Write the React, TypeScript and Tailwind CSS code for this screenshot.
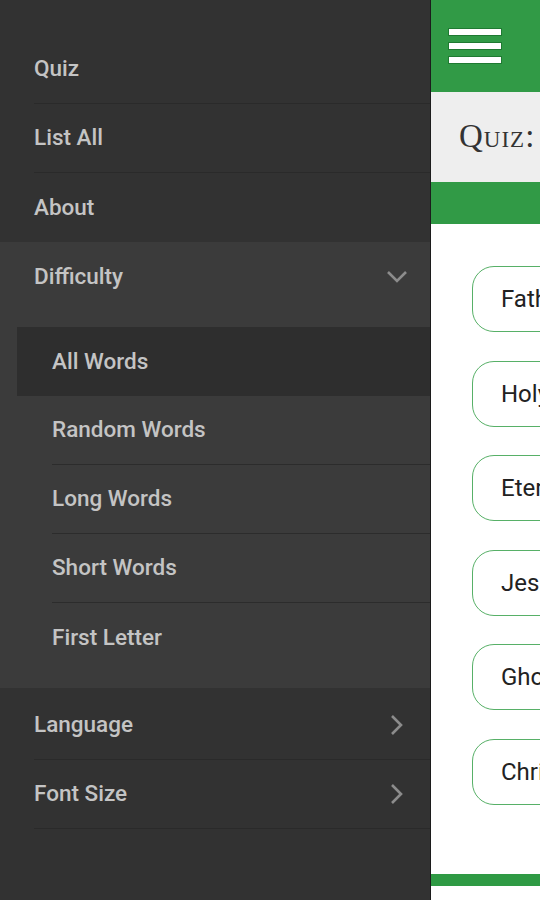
import React from "react";

const font = { fontFamily: "Roboto, 'Liberation Sans', sans-serif" };

function ChevronDown() {
  return (
    <svg width="22" height="14" viewBox="0 0 22 14" className="shrink-0">
      <path d="M2 2 L11 11 L20 2" fill="none" stroke="#8c8c8c" strokeWidth="2.6" />
    </svg>
  );
}

function ChevronRight() {
  return (
    <svg width="14" height="22" viewBox="0 0 14 22" className="shrink-0">
      <path d="M2 2 L11 11 L2 20" fill="none" stroke="#8c8c8c" strokeWidth="2.6" />
    </svg>
  );
}

const topItems = ["Quiz", "List All", "About"];
const subItems = ["All Words", "Random Words", "Long Words", "Short Words", "First Letter"];
const answers = ["Father", "Holy Spirit", "Eternal", "Jesus", "Ghost", "Christ"];

export default function App() {
  return (
    <div className="flex h-[900px] w-[540px] overflow-hidden bg-white" style={font}>
      {/* drawer */}
      <div className="flex w-[431px] shrink-0 flex-col border-r border-[#1c1c1c] bg-[#323232] pt-[35px]">
        {topItems.map((t, i) => (
          <div key={t} className="pl-[34px]">
            <div
              className={
                "flex h-[69px] items-center text-[22.5px] font-medium text-[#c4c4c4] " +
                (i < 2 ? "border-b border-[#2a2a2a]" : "")
              }
            >
              {t}
            </div>
          </div>
        ))}

        <div className="flex flex-col bg-[#3b3b3b] pb-[16px]">
          <div className="flex h-[69px] items-center justify-between pl-[34px] pr-[22px] text-[22.5px] font-medium text-[#c4c4c4]">
            <span>Difficulty</span>
            <ChevronDown />
          </div>
          <div className="mt-[16px] flex flex-col pl-[17px]">
            {subItems.map((t, i) => (
              <div key={t} className={i === 0 ? "bg-[#2e2e2e]" : ""}>
                <div className="pl-[35px]">
                  <div
                    className={
                      "flex h-[69px] items-center text-[22.5px] font-medium text-[#c4c4c4] " +
                      (i > 0 && i < 4 ? "border-b border-[#2c2c2c]" : "")
                    }
                  >
                    {t}
                  </div>
                </div>
              </div>
            ))}
          </div>
        </div>

        <div className="mt-[3px] flex flex-col">
          {["Language", "Font Size"].map((t) => (
            <div key={t} className="pl-[34px]">
              <div className="flex h-[69px] items-center justify-between border-b border-[#2a2a2a] pr-[26px] text-[22.5px] font-medium text-[#c4c4c4]">
                <span>{t}</span>
                <ChevronRight />
              </div>
            </div>
          ))}
        </div>
      </div>

      {/* main panel */}
      <div className="flex min-w-0 flex-1 flex-col">
        <div className="flex h-[92px] shrink-0 flex-col justify-center gap-[6px] bg-[#319a46] pl-[17px]">
          {[0, 1, 2].map((k) => (
            <div key={k} className="h-[8px] w-[54px] border border-[#1f7a32] bg-white" />
          ))}
        </div>
        <div className="flex h-[90px] shrink-0 items-center bg-[#eeeeee] pl-[28px]">
          <span
            className="whitespace-nowrap text-[33px] tracking-[1px] text-[#333333]"
            style={{ fontFamily: "'Liberation Serif', serif", fontVariant: "small-caps" }}
          >
            Quiz:
          </span>
        </div>
        <div className="h-[42px] shrink-0 bg-[#319a46]" />
        <div className="flex flex-1 flex-col gap-[28.6px] pl-[41px] pt-[42px]">
          {answers.map((a) => (
            <div
              key={a}
              className="flex h-[66px] w-[220px] shrink-0 items-center whitespace-nowrap rounded-[22px] border-[1.5px] border-[#57b067] pl-[28px] text-[24px] text-[#222222]"
            >
              {a}
            </div>
          ))}
        </div>
        <div className="mb-[14px] h-[12px] shrink-0 bg-[#2f9a44]" />
      </div>
    </div>
  );
}
